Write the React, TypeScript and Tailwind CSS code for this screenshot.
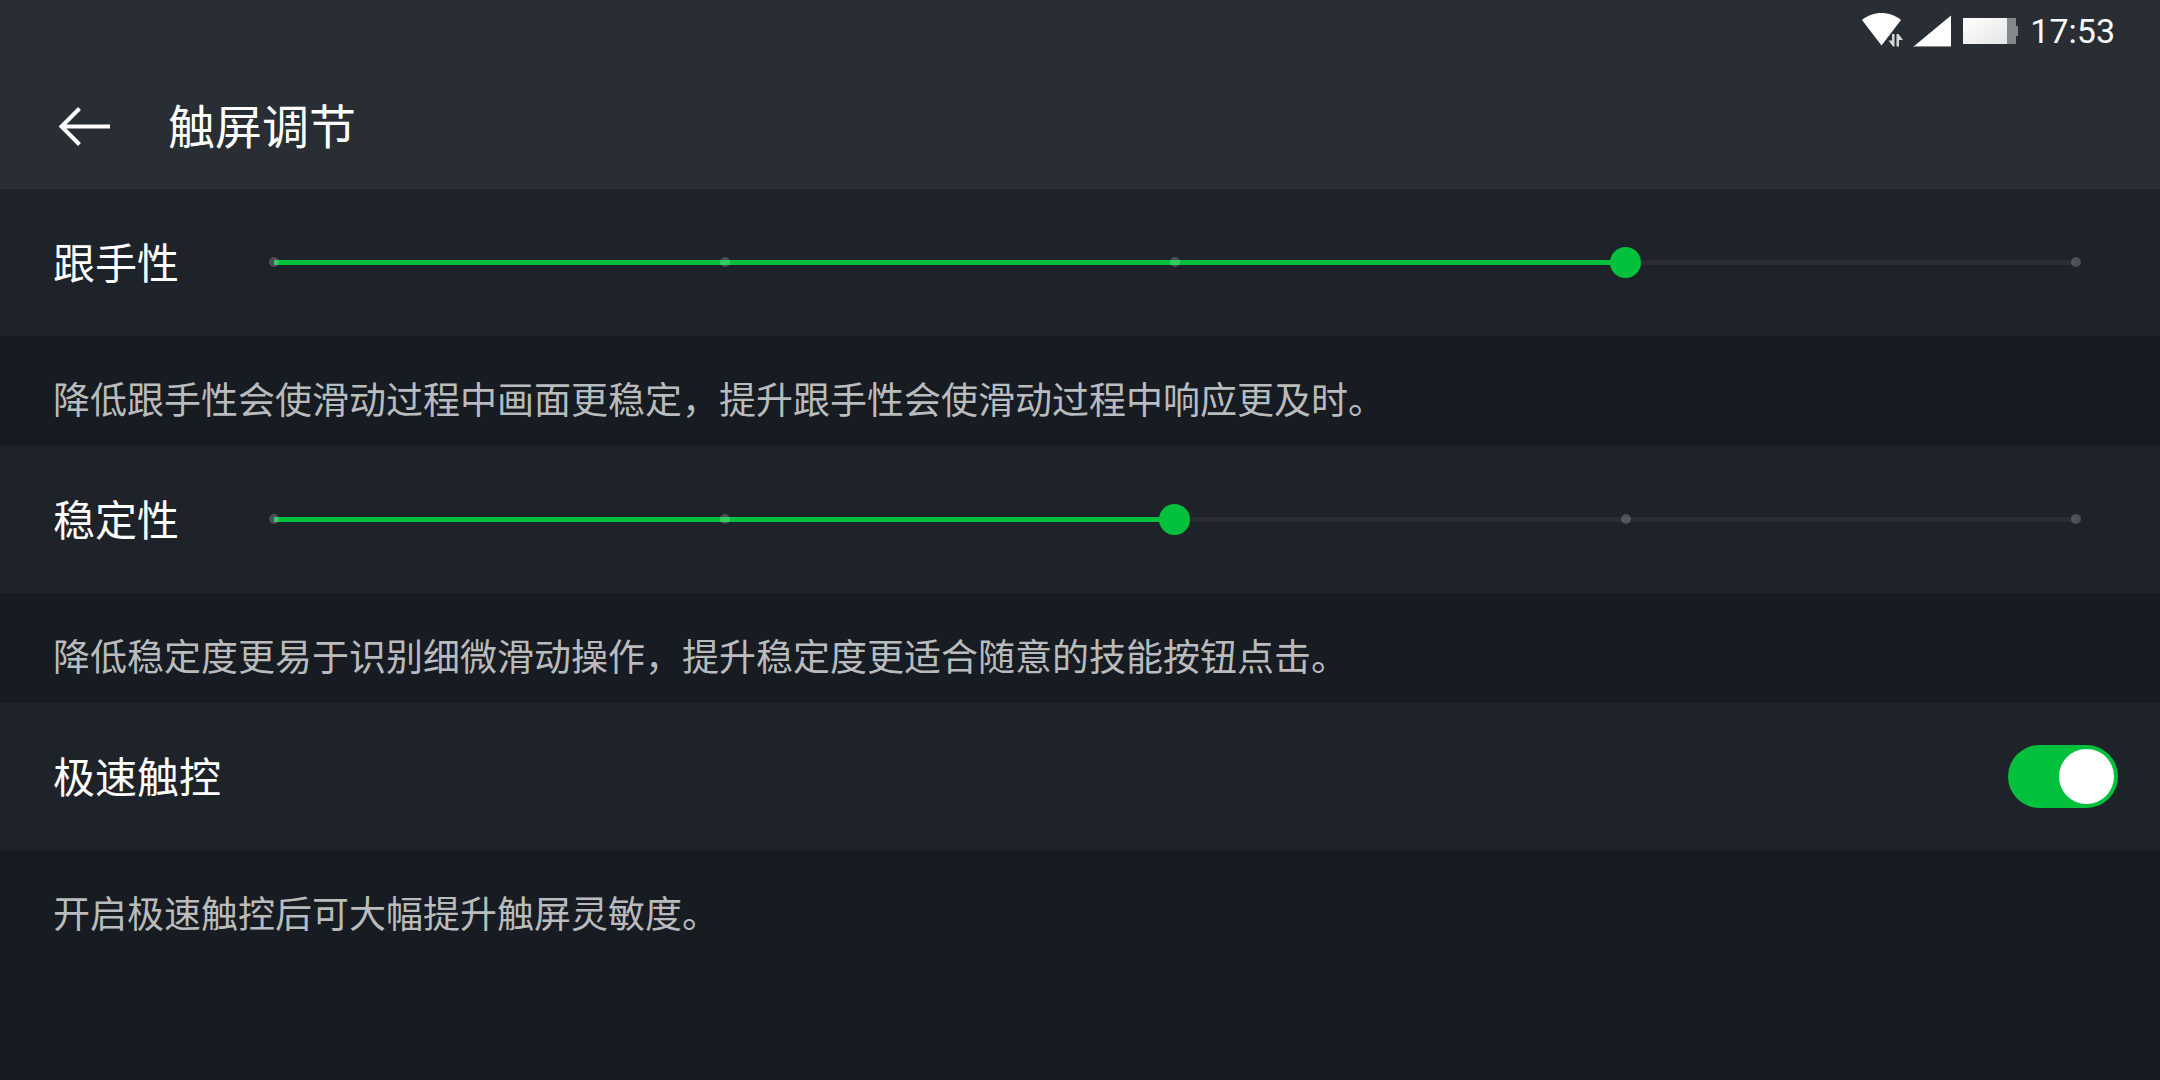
import React, { useId, useState } from 'react';

const STEPS = [0, 25, 50, 75, 100];

const WifiIcon = () => (
  <svg viewBox="0 0 44 36" className="h-9 w-11" aria-hidden="true">
    <path d="M0 7 C11 -2.3 28 -2.3 39 7 L29.5 19.5 L26 24 L19.5 32.5 Z" fill="#fff" />
    <path d="M30 21 H32.5 V33.5 H31 L26.5 27.5 H30 Z M34.5 33.5 V21 H36.5 L41 27 H37 V33.5 Z" fill="#d5d7d9" />
  </svg>
);

const SignalIcon = () => (
  <svg viewBox="0 0 38 32" className="h-8 w-[38px]" aria-hidden="true">
    <path d="M38 0.5 V32 H0 Z" fill="#fff" />
    <path d="M0 32 L1 31 H38 V32 Z" fill="#85888b" />
  </svg>
);

const BatteryIcon = () => (
  <svg viewBox="0 0 55 26" className="h-[26px] w-[55px]" aria-hidden="true">
    <defs>
      <linearGradient id="battery-fill" x1="0" y1="0" x2="1" y2="1">
        <stop offset="0" stopColor="#fff" />
        <stop offset="1" stopColor="#e4e5e6" />
      </linearGradient>
    </defs>
    <path d="M44 0 H53 V8 H55 V18 H53 V26 H44 Z" fill="#85888b" />
    <rect width="44" height="26" fill="url(#battery-fill)" />
  </svg>
);

const BackIcon = () => (
  <svg viewBox="0 0 54 40" className="h-10 w-[54px]" fill="none" stroke="#fff" strokeWidth="4" aria-hidden="true">
    <path d="M22.5 2.5 L4.5 20.5 L22.5 38.5 M4 20.5 H53" />
  </svg>
);

const Description: React.FC<{ children: React.ReactNode }> = ({ children }) => (
  <p className="flex h-[110px] items-center px-[53px] pt-[14px] text-[37px] leading-[56px] text-[#b9bbbd]">{children}</p>
);

const SliderRow: React.FC<{ label: string; initial: number }> = ({ label, initial }) => {
  const id = useId();
  const [value, setValue] = useState(initial);

  return (
    <div className="flex h-[147px] items-center bg-[#1e2229] pr-[84px] pl-[53px]">
      <label htmlFor={id} className="w-[221px] shrink-0 pb-1 text-[42px] leading-[60px]">
        {label}
      </label>
      <div className="relative h-[5px] flex-1 bg-[#2a2d34]">
        <div className="h-full bg-[#03c13c]" style={{ width: `${value}%` }} />
        {STEPS.map((step) => (
          <span
            key={step}
            className="absolute -top-[3px] -ml-[5px] size-[10px] rounded-full bg-white/20"
            style={{ left: `${step}%` }}
          />
        ))}
        {/* Wider than the track by one thumb, so the thumb centre lands on the steps */}
        <div className="absolute -top-[13px] -right-[15px] -left-4 flex h-[31px]">
          <input
            id={id}
            type="range"
            min={0}
            max={100}
            step={25}
            value={value}
            onChange={(e) => setValue(Number(e.target.value))}
            className="h-[31px] w-full cursor-pointer appearance-none bg-transparent outline-none [&::-webkit-slider-thumb]:size-[31px] [&::-webkit-slider-thumb]:appearance-none [&::-webkit-slider-thumb]:rounded-full [&::-webkit-slider-thumb]:bg-[#03c13c]"
          />
        </div>
      </div>
    </div>
  );
};

const SwitchRow: React.FC<{ label: string }> = ({ label }) => {
  const id = useId();
  const [checked, setChecked] = useState(true);

  return (
    <div className="flex h-[147px] items-center justify-between bg-[#1e2229] pr-[42px] pl-[53px]">
      <label htmlFor={id} className="pb-1 text-[42px] leading-[60px]">
        {label}
      </label>
      <input
        id={id}
        type="checkbox"
        role="switch"
        checked={checked}
        onChange={(e) => setChecked(e.target.checked)}
        className="flex h-[63px] w-[110px] cursor-pointer appearance-none rounded-full bg-[#4a4e55] p-1 before:size-[55px] before:rounded-full before:bg-white checked:justify-end checked:bg-[#03c13c]"
      />
    </div>
  );
};

export default function App() {
  return (
    <div className="min-h-screen bg-[#171b22] font-['Noto_Sans_CJK_SC',sans-serif] text-white">
      <header className="bg-[#292d34]">
        <div className="flex h-[62px] items-center justify-end pr-[45px]">
          <WifiIcon />
          <div className="ml-[7px]">
            <SignalIcon />
          </div>
          <div className="ml-3">
            <BatteryIcon />
          </div>
          <time className="ml-3 font-[Roboto,sans-serif] text-[34px] leading-10">17:53</time>
        </div>
        <div className="flex h-[127px] items-center pl-[57px]">
          <button type="button" aria-label="返回" className="cursor-pointer">
            <BackIcon />
          </button>
          <h1 className="ml-[57px] pb-1 text-[47px] leading-[68px]">触屏调节</h1>
        </div>
      </header>
      <main>
        <SliderRow label="跟手性" initial={75} />
        <Description>降低跟手性会使滑动过程中画面更稳定，提升跟手性会使滑动过程中响应更及时。</Description>
        <SliderRow label="稳定性" initial={50} />
        <Description>降低稳定度更易于识别细微滑动操作，提升稳定度更适合随意的技能按钮点击。</Description>
        <SwitchRow label="极速触控" />
        <Description>开启极速触控后可大幅提升触屏灵敏度。</Description>
      </main>
    </div>
  );
}
